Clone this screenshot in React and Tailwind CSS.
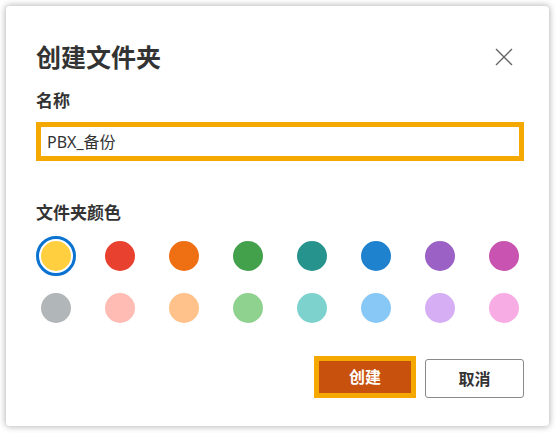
import React from "react";

const row1 = ["#FFCF3F", "#E8412F", "#EE7012", "#43A04B", "#26948D", "#1E82CF", "#9B61C4", "#C953B0"];
const row2 = ["#B1B6B8", "#FFBCB5", "#FFC28A", "#8FD290", "#7DD2CE", "#88C8F7", "#D6AEF3", "#F7ADE4"];

function Swatch({ color, selected }) {
  return (
    <div className="w-[40px] h-[40px] flex items-center justify-center">
      {selected ? (
        <div className="w-[40px] h-[40px] rounded-full border-[3px] border-[#0A73D1] flex items-center justify-center">
          <div className="w-[30px] h-[30px] rounded-full" style={{ backgroundColor: color }} />
        </div>
      ) : (
        <div className="w-[30px] h-[30px] rounded-full" style={{ backgroundColor: color }} />
      )}
    </div>
  );
}

export default function App() {
  return (
    <div
      className="w-[556px] h-[433px] bg-white pt-[6px] pl-[6px] overflow-hidden"
      style={{ fontFamily: '"Noto Sans", "Noto Sans CJK SC", sans-serif' }}
    >
      <div className="w-[543px] h-[420px] bg-white rounded-[4px] shadow-[0_0_6px_1px_rgba(0,0,0,0.28)] pl-[30px] pr-[25px] pt-[35px] flex flex-col">
        <div className="flex items-center justify-between h-[32px]">
          <div className="text-[25px] leading-[32px] font-bold text-[#333]">创建文件夹</div>
          <svg width="18" height="18" viewBox="0 0 18 18" className="mr-[11px]">
            <path d="M1 1 L17 17 M17 1 L1 17" stroke="#666" strokeWidth="1.4" fill="none" />
          </svg>
        </div>
        <div className="mt-[16px] text-[17px] leading-[24px] font-bold text-[#333]">名称</div>
        <div className="mt-[9px] h-[39px] border-[5px] border-[#F5A800] flex items-center pl-[6px] text-[16px] text-[#333]">
          PBX_备份
        </div>
        <div className="mt-[40px] text-[17px] leading-[24px] font-bold text-[#333]">文件夹颜色</div>
        <div className="mt-[11px] flex gap-[24px]">
          {row1.map((c, i) => (
            <Swatch key={c} color={c} selected={i === 0} />
          ))}
        </div>
        <div className="mt-[12px] flex gap-[24px]">
          {row2.map((c) => (
            <Swatch key={c} color={c} />
          ))}
        </div>
        <div className="mt-[28px] flex justify-end items-end gap-[9px]">
          <div className="w-[102px] h-[42px] border-[5px] border-[#F5A800] bg-[#C8510E] flex items-center justify-center text-white text-[16px] font-bold">
            创建
          </div>
          <div className="w-[99px] h-[39px] border border-[#8a8a8a] rounded-[3px] flex items-center justify-center text-[#333] text-[16px] font-bold">
            取消
          </div>
        </div>
      </div>
    </div>
  );
}
